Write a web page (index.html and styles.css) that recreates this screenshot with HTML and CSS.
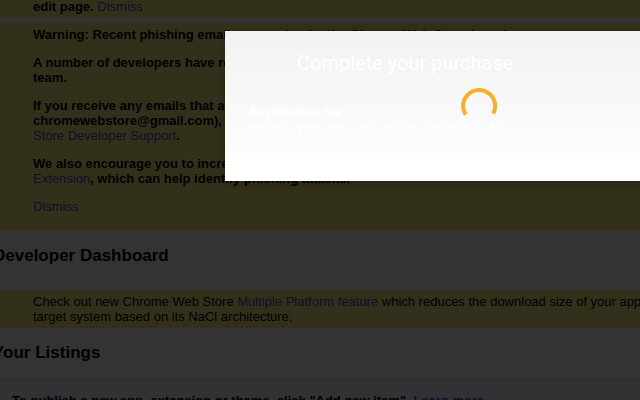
FILE: index.html
```html
<!DOCTYPE html>
<html lang="en">
<head>
    <meta charset="UTF-8">
    <meta name="viewport" content="width=device-width, initial-scale=1.0">
    <title>Developer Dashboard</title>
    <link rel="stylesheet" href="styles.css">
</head>
<body>

<!-- Dashboard page -->
<main class="page">
    <div class="notice notice-top">
        <p><b>edit page.</b> <a href="#">Dismiss</a></p>
    </div>

    <div class="notice notice-warning">
        <p><b>Warning: Recent phishing emails pretend to be the Chrome Web Store brand</b></p>
        <p><b>A number of developers have received phishing emails from the store<br>team.</b></p>
        <p><b>If you receive any emails that ask for your password (for example<br>chromewebstore@gmail.com), please report them to</b><br><a href="#">Store Developer Support</a><b>.</b></p>
        <p><b>We also encourage you to increase your security with the<br></b><a href="#">Extension</a><b>, which can help identify phishing attacks.</b></p>
        <p><a href="#">Dismiss</a></p>
    </div>

    <h1>Developer Dashboard</h1>

    <div class="notice notice-info">
        <p>Check out new Chrome Web Store <a href="#">Multiple Platform feature</a> which reduces the download size of your app<br>target system based on its NaCl architecture.</p>
    </div>

    <h2>Your Listings</h2>

    <div class="listings">
        <p><b>To publish a new app, extension or theme, click "Add new item". <a href="#">Learn more</a></b></p>
    </div>
</main>

<!-- Purchase dialog -->
<div class="overlay">
    <div class="dialog" role="dialog" aria-labelledby="dialog-title">
        <h2 id="dialog-title">Complete your purchase</h2>
        <div class="item">
            <strong>Registration fee</strong>
            <span>Chrome Web Store developer registration fee</span>
        </div>
        <svg class="spinner" viewBox="0 0 36 36" role="img" aria-label="Loading">
            <path d="M4.6 26.6 A16 16 0 1 1 32.2 25.6" />
        </svg>
    </div>
</div>

</body>
</html>
```

FILE: styles.css
```css
body {
    font-family: "Liberation Sans", Arial, sans-serif;
    font-size: 13px;
    line-height: 15px;
    margin: 0;
    background-color: #fff;
    color: #000;
    overflow: hidden;
}

a {
    color: #4a4ac8;
    text-decoration: none;
}

/* Page is scrolled a little to the right */
.page {
    margin-left: -7px;
    white-space: nowrap;
}

.page h1,
.page h2 {
    font-size: 17px;
    line-height: 20px;
    margin: 0;
}

.page h1 {
    padding: 15px 0 24px;
}

.page h2 {
    padding: 15px 0 17px;
}

/* Yellow notices */
.notice {
    background-color: #fbee88;
    padding: 4px 40px;
}

.notice p {
    margin: 0 0 13px;
}

.notice p:last-child {
    margin-bottom: 0;
}

.notice-top {
    padding-top: 0;
    margin-top: -1px;
    margin-bottom: 5px;
}

.notice-warning {
    padding-bottom: 17px;
}

.listings {
    background-color: #f5faff;
    border-top: 1px solid #d0dcec;
    padding: 12px 19px;
}

.listings p {
    margin: 0;
}

/* Dialog */
.overlay {
    position: fixed;
    top: 0;
    left: 0;
    width: 100%;
    height: 100%;
    background-color: rgba(0, 0, 0, 0.8);
}

.dialog {
    position: relative;
    width: 508px;
    box-sizing: border-box;
    margin: 31px 0 0 225px;
    padding: 20px 24px 42px;
    background: linear-gradient(#f1f2f2, #fcfcfc 78%, #fff 84%);
    box-shadow: 0 2px 12px rgba(0, 0, 0, 0.3);
    color: #fff;
    font-family: Roboto, sans-serif;
}

.dialog h2 {
    margin: 0 0 28px;
    padding-left: 48px;
    font-size: 20px;
    font-weight: 400;
    line-height: 24px;
}

.item {
    display: flex;
    flex-direction: column;
    line-height: 18px;
}

.spinner {
    position: absolute;
    top: 57px;
    left: 50%;
    width: 36px;
    margin-left: -18px;
}

.spinner path {
    fill: none;
    stroke: #f5b02a;
    stroke-width: 4;
}
```
